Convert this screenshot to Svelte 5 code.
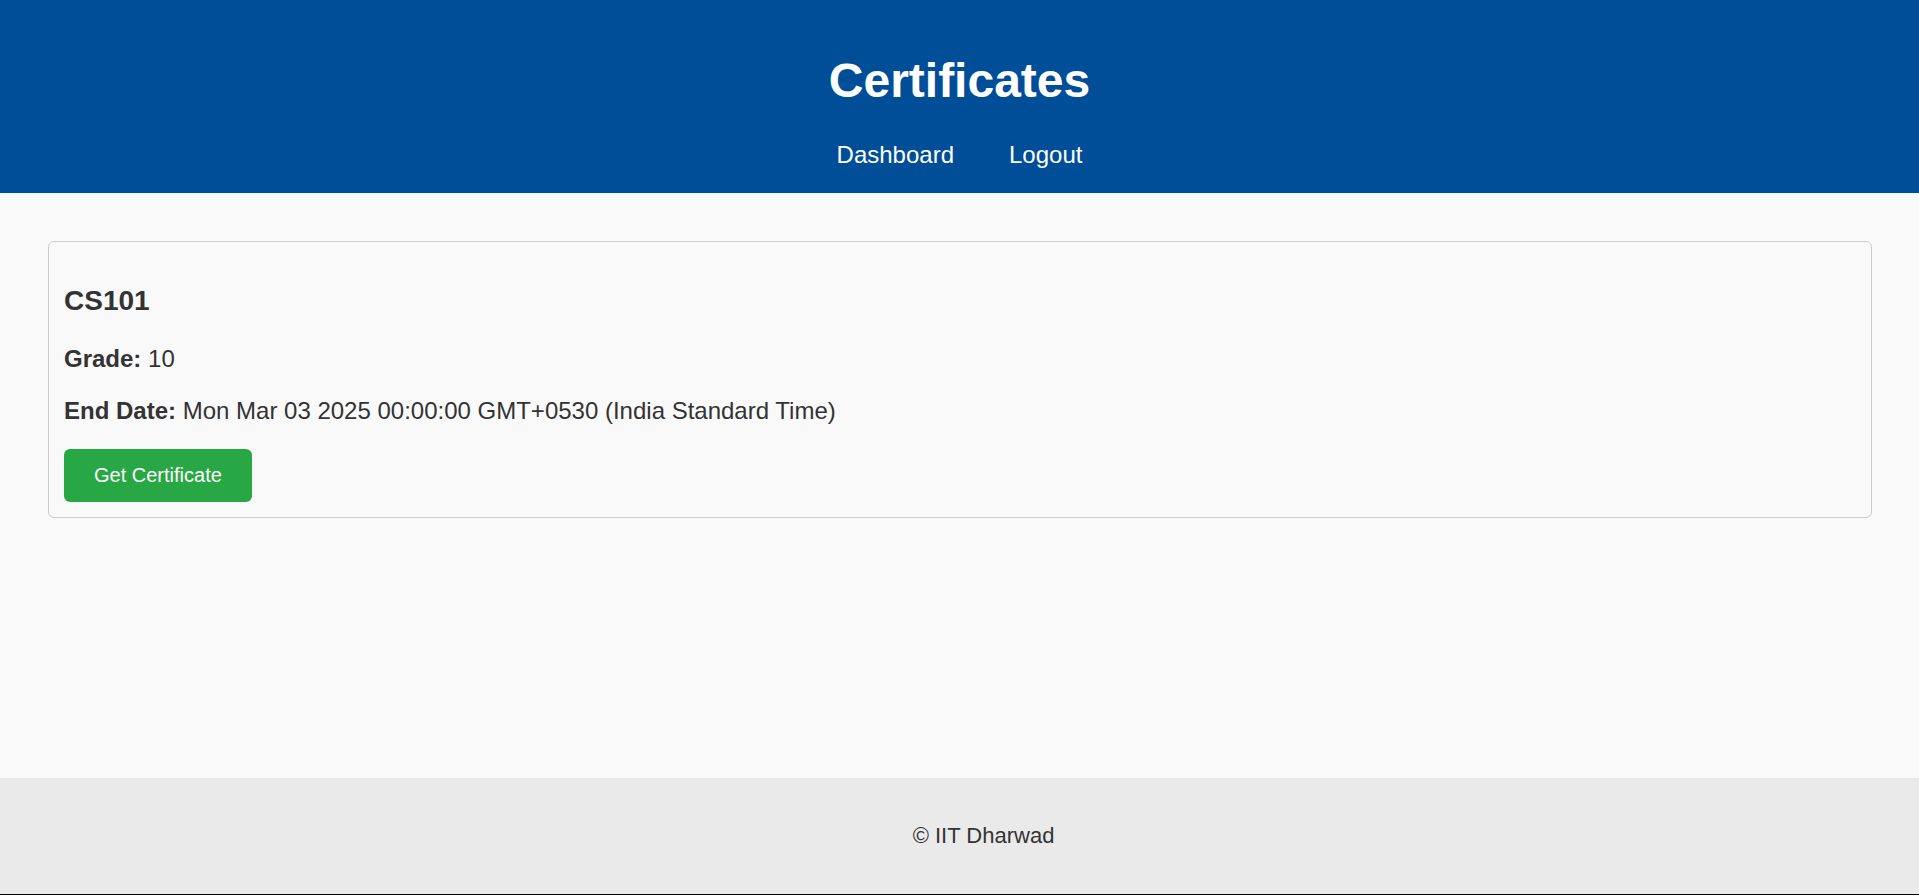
<script>
  const links = [
    { label: 'Dashboard', href: '#dashboard' },
    { label: 'Logout', href: '#logout' },
  ];
  const certificates = [
    {
      course: 'CS101',
      grade: 10,
      endDate: 'Mon Mar 03 2025 00:00:00 GMT+0530 (India Standard Time)',
    },
  ];
</script>

<div class="page">
  <header>
    <h1>Certificates</h1>
    <nav>
      {#each links as link}
        <a href={link.href}>{link.label}</a>
      {/each}
    </nav>
  </header>

  <main>
    {#each certificates as cert}
      <article class="card">
        <h3>{cert.course}</h3>
        <p><strong>Grade:</strong> {cert.grade}</p>
        <p><strong>End Date:</strong> {cert.endDate}</p>
        <button type="button">Get Certificate</button>
      </article>
    {/each}
  </main>

  <footer>
    <p>© IIT Dharwad</p>
  </footer>
</div>

<style>
  :global(body) {
    margin: 0;
    background: #f9f9f9;
  }

  .page {
    display: flex;
    flex-direction: column;
    box-sizing: border-box;
    min-height: 100vh;
    border-bottom: 1px solid #000;
    font-family: Arial, 'Liberation Sans', sans-serif;
    font-size: 24px;
    line-height: 28px;
    color: #333;
  }

  header {
    padding: 53px 24px 24px;
    background: #004e98;
    color: #fff;
    text-align: center;
  }

  h1 {
    margin: 0 0 32px;
    font-size: 48px;
    line-height: 56px;
  }

  nav {
    display: flex;
    justify-content: center;
    gap: 55px;
  }

  nav a {
    color: #fff;
    text-decoration: none;
  }

  main {
    flex: 1;
    padding: 48px 47px 48px 48px;
  }

  .card {
    padding: 15px;
    border: 1px solid #ccc;
    border-radius: 6px;
  }

  h3 {
    margin: 28px 0;
    font-size: 28px;
    line-height: 32px;
  }

  .card p {
    margin: 0 0 24px;
  }

  button {
    display: block;
    padding: 15px 30px;
    border: 0;
    border-radius: 6px;
    background: #28a745;
    color: #fff;
    font-family: inherit;
    font-size: 20px;
    line-height: 23px;
    cursor: pointer;
  }

  footer {
    padding: 45px 0 45px 48px;
    background: #eaeaea;
    text-align: center;
  }

  footer p {
    margin: 0;
    font-size: 22px;
    line-height: 26px;
  }
</style>
